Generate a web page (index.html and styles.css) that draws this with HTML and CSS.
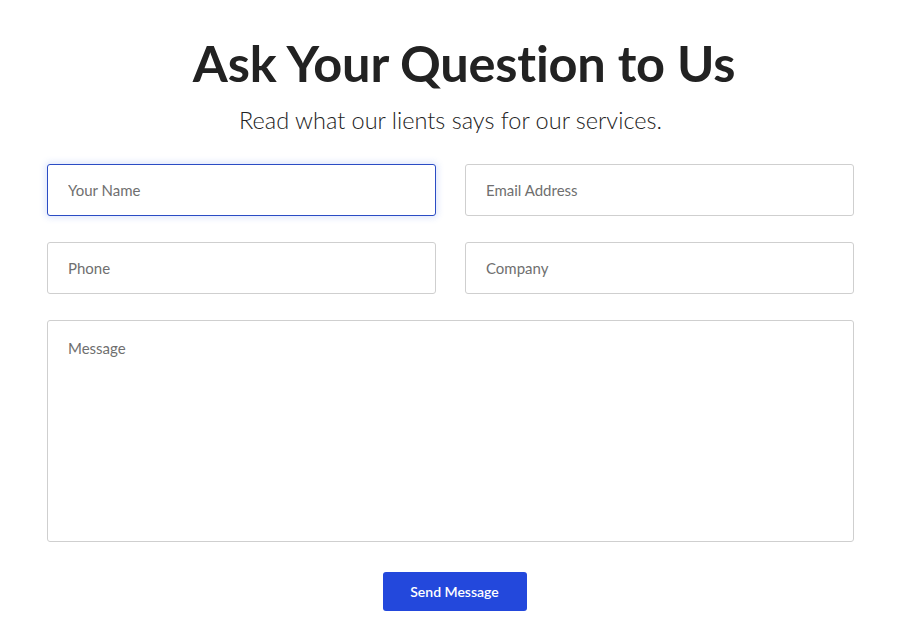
FILE: index.html
```html
<!DOCTYPE html>
<html lang="en">
<head>
<meta charset="utf-8">
<title>Ask Your Question to Us</title>
<link rel="stylesheet" href="styles.css">
</head>
<body>
<section class="contact">
  <h1 class="title">Ask Your Question to Us</h1>
  <p class="subtitle">Read what our lients says for our services.</p>
  <form class="form">
    <div class="grid">
      <input class="field focused" type="text" placeholder="Your Name">
      <input class="field" type="email" placeholder="Email Address">
      <input class="field" type="text" placeholder="Phone">
      <input class="field" type="text" placeholder="Company">
      <textarea class="field message" placeholder="Message"></textarea>
    </div>
    <div class="actions">
      <button class="btn" type="button">Send Message</button>
    </div>
  </form>
</section>
</body>
</html>
```
FILE: styles.css
```css
* { box-sizing: border-box; }
html, body { margin: 0; padding: 0; background: #fff; }
body { font-family: Lato, "Open Sans", sans-serif; color: #222; }

.contact {
  width: 807px;
  margin: 0 0 0 47px;
  padding-top: 33px;
}
.title {
  margin: 0;
  padding-left: 27px;
  text-align: center;
  font-size: 50.5px;
  font-weight: 700;
  line-height: 60px;
  color: #222;
  letter-spacing: -0.2px;
}
.subtitle {
  margin: 12px 0 0;
  text-align: center;
  font-size: 23.5px;
  font-weight: 300;
  line-height: 30px;
  color: #222;
}
.form { margin-top: 29px; }
.grid {
  display: grid;
  grid-template-columns: 1fr 1fr;
  column-gap: 29px;
  row-gap: 26px;
}
.field {
  display: block;
  width: 100%;
  height: 52px;
  border: 1px solid #cfcfcf;
  border-radius: 3px;
  padding: 0 20px;
  font-family: Lato, sans-serif;
  font-size: 15px;
  color: #333;
  background: #fff;
  outline: none;
}
.field::placeholder { color: #6f6f6f; }
.focused {
  border-color: #2b4cc4;
  box-shadow: 0 0 6px 2px rgba(80, 120, 240, 0.18);
}
.message {
  grid-column: 1 / -1;
  height: 222px;
  padding: 18px 20px;
  resize: none;
}
.actions {
  display: flex;
  justify-content: center;
  margin-top: 30px;
  padding-left: 8px;
}
.btn {
  width: 144px;
  height: 39px;
  border: none;
  border-radius: 3px;
  background: #2348dc;
  color: #fff;
  font-family: Lato, sans-serif;
  font-size: 14px;
  font-weight: 600;
  cursor: pointer;
}
```
